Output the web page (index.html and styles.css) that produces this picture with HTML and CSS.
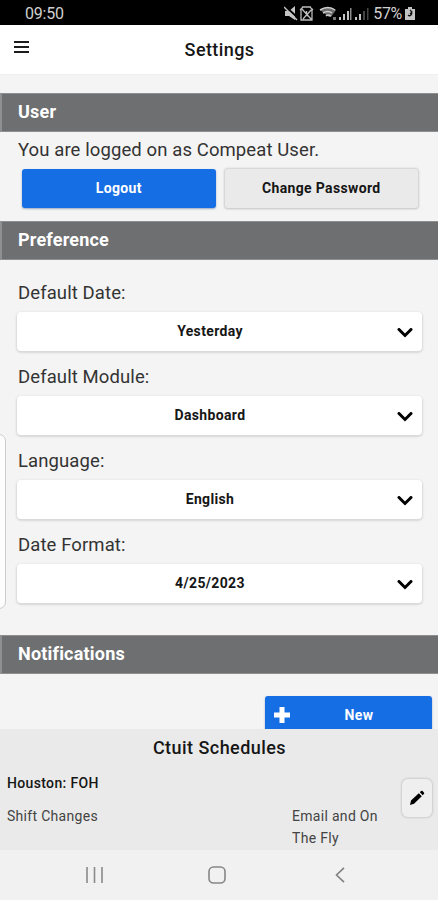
FILE: index.html
```html
<!DOCTYPE html>
<html lang="en">
<head>
<meta charset="utf-8">
<meta name="viewport" content="width=device-width">
<title>Settings</title>
<link rel="stylesheet" href="styles.css">
</head>
<body>
<div class="status">
  <span class="clock">09:50</span>
  <svg class="status-icons" width="88" height="18" viewBox="0 0 88 18">
    <g fill="#c4c4c4" stroke="none">
      <path d="M1 6h4l6-5v14l-6-4H1z"/>
      <path d="M1 1l13 12" stroke="#000" stroke-width="2"/>
      <path d="M0 2l13 13" stroke="#c4c4c4" stroke-width="1.5"/>
      <path d="M36 5q8-6 16 0l-5 7h-2z" opacity=".55"/>
      <path d="M36 5q8-5 15 0M39 8q5-3 9 0M42 11q2-2 5 0" fill="none" stroke="#d0d0d0" stroke-width="1.5"/>
      <path d="M49 12h3v3h-3z" opacity=".6"/>
      <path d="M55 12h2v3h-2zM59 9h2v6h-2zM63 6h2v9h-2z"/>
      <path d="M66 3h1.500v12h-1.500z" opacity=".7"/>
      <path d="M71 12h2v3h-2zM75 9h2v6h-2z"/>
      <path d="M79 6h2v9h-2zM83 3h1.500v12h-1.500z" opacity=".35"/>
    </g>
    <g fill="none" stroke="#bcbcbc" stroke-width="1.300">
      <path d="M17 5v10h11V5M16 5l3-3M26 2l3 3M17 3l11 12M28 4l-9 10M22.500 6v4l3 2M18 2h9"/>
    </g>
  </svg>
  <span class="battery-text">57%</span>
  <svg class="battery" width="10" height="13" viewBox="0 0 10 13"><path fill="#c4c4c4" d="M3 0h4v2h3v11H0V2h3z"/><path d="M3 8a2 2 0 1 0 3-3M5 3l2 2-2 2" fill="none" stroke="#111" stroke-width="1.200"/></svg>
</div>
<header class="header">
  <svg class="menu" width="15" height="12" viewBox="0 0 15 12"><path d="M0 1h15M0 6h15M0 11h15" stroke="#1c1c1c" stroke-width="2"/></svg>
  <h1>Settings</h1>
</header>
<main class="page">
  <h2 class="bar">User</h2>
  <section class="user">
    <p class="label message">You are logged on as Compeat User.</p>
    <div class="actions">
      <button class="btn primary">Logout</button>
      <button class="btn">Change Password</button>
    </div>
  </section>
  <h2 class="bar">Preference</h2>
  <section class="prefs">
    <div class="field"><div class="label">Default Date:</div><div class="select"><span>Yesterday</span><svg class="chev" width="16" height="10" viewBox="0 0 16 10"><path d="M2 1.500L8 7.500l6-6"/></svg></div></div>
    <div class="field"><div class="label">Default Module:</div><div class="select"><span>Dashboard</span><svg class="chev" width="16" height="10" viewBox="0 0 16 10"><path d="M2 1.500L8 7.500l6-6"/></svg></div></div>
    <div class="field"><div class="label">Language:</div><div class="select"><span>English</span><svg class="chev" width="16" height="10" viewBox="0 0 16 10"><path d="M2 1.500L8 7.500l6-6"/></svg></div></div>
    <div class="field"><div class="label">Date Format:</div><div class="select"><span>4/25/2023</span><svg class="chev" width="16" height="10" viewBox="0 0 16 10"><path d="M2 1.500L8 7.500l6-6"/></svg></div></div>
  </section>
  <h2 class="bar">Notifications</h2>
  <div class="new-row">
    <button class="btn primary new"><svg class="plus" width="16" height="16" viewBox="0 0 16 16"><path d="M5.500 0h5v5.500H16v5h-5.500V16h-5v-5.500H0v-5h5.500z" fill="#fff"/></svg><span>New</span></button>
  </div>
  <section class="schedule">
    <h3>Ctuit Schedules</h3>
    <div class="site">
      <div class="site-info">
        <strong>Houston: FOH</strong>
        <div class="rule"><span>Shift Changes</span><span class="via">Email and On The Fly</span></div>
      </div>
      <button class="edit" aria-label="Edit"><svg width="16" height="16" viewBox="0 0 16 16"><path d="M1 15l1-4.500L9.800 3.200l3 3L5 13.800zM10.800 2.300l1.200-1.200q.8-.7 1.600 0l1.300 1.300q.8.800 0 1.600L13.700 5.200z" fill="#000"/></svg></button>
    </div>
  </section>
</main>
<nav class="nav">
  <svg width="17" height="16" viewBox="0 0 17 16"><path d="M1 0v16M8.500 0v16M16 0v16" stroke="#8a8a8a" stroke-width="1.600"/></svg>
  <svg class="home" width="18" height="18" viewBox="0 0 18 18"><rect x="1" y="1" width="16" height="16" rx="4.500" fill="none" stroke="#868686" stroke-width="1.600"/></svg>
  <svg width="10" height="16" viewBox="0 0 10 16"><path d="M9 .8L1.500 8 9 15.200" fill="none" stroke="#808080" stroke-width="1.600"/></svg>
</nav>
<div class="edge-panel"></div>
</body>
</html>
```
FILE: styles.css
```css
* { box-sizing: border-box; }
body { margin: 0; width: 438px; height: 900px; overflow: hidden; display: flex; flex-direction: column; background: #f4f4f4; color: #161616; font-family: Roboto, sans-serif; }
h1, h2, h3, p { margin: 0; }
button { font-family: inherit; border: 0; padding: 0; }
svg { display: block; }
.status { height: 25px; flex: none; background: #000; color: #d0d0d0; display: flex; align-items: center; padding: 2px 23px 0 25px; font-size: 16px; }
.clock { letter-spacing: -.2px; }
.status-icons { margin-left: auto; }
.battery-text { margin-left: 1px; letter-spacing: -.3px; }
.battery { margin-left: 3px; }
.header { height: 50px; flex: none; background: #fff; border-bottom: 1px solid #f0f0f0; display: grid; grid-template-columns: 14px 1fr 14px; align-items: center; padding: 0 13px; }
.header h1 { text-align: center; font-size: 18px; font-weight: 500; letter-spacing: .4px; line-height: 24px; padding-left: 1px; }
.menu { margin: -6px 0 0 1px; }
.page { flex: none; height: 775px; padding-top: 18px; }
.bar { height: 39px; line-height: 36px; background: #6d6f71; color: #fff; border-left: 2px solid #8d8f90; border-top: 1px solid #8d8f90; border-bottom: 1px solid #8d8f90; padding-left: 16px; font-size: 18px; font-weight: 700; letter-spacing: .2px; }
.label { font-size: 18.5px; line-height: 24px; letter-spacing: .1px; color: #333; }
.prefs .label { padding-left: 1px; }
.user { height: 89px; padding: 6px 20px 0 18px; }
.actions { display: flex; gap: 9px; padding: 7px 0 0 4px; }
.btn { flex: 1; height: 39px; border-radius: 3px; background: #eaeaea; color: #161616; font-size: 14px; font-weight: 700; letter-spacing: .35px; box-shadow: 0 0 2px 1px #d0d0d0, 0 1px 2px #ccc; }
.primary { background: #166ee5; color: #fff; box-shadow: 0 1px 2px #9aa9bf; }
.actions .btn { padding-bottom: 1px; }
.prefs { height: 375px; padding: 21px 16px 0 17px; }
.field { height: 84px; }
.label + .select { margin-top: 7px; }
.select { height: 39px; display: grid; grid-template-columns: 1fr 50px; align-items: center; background: #fff; border-radius: 4px; box-shadow: 0 1px 2px 1px #d8d8d8; font-size: 14px; font-weight: 700; letter-spacing: .35px; text-align: center; }
.select span { padding: 0 0 1px 31px; }
.chev { margin: 2px 0 0 25px; fill: none; stroke: #000; stroke-width: 3; stroke-linecap: round; }
.new-row { height: 55px; padding: 22px 6px 0; display: flex; justify-content: flex-end; overflow: hidden; }
.new { flex: none; width: 167px; height: 39px; display: grid; grid-template-columns: 25px 1fr; align-items: center; padding: 0 0 2px 9px; }
.new span { padding-right: 13px; }
.schedule { height: 121px; background: #eaeaea; padding-top: 7px; }
.schedule h3 { text-align: center; font-size: 18px; line-height: 24px; font-weight: 500; letter-spacing: .45px; padding-left: 1px; }
.site { display: flex; padding: 12px 6px 0 7px; }
.site-info { flex: 1; font-size: 14px; line-height: 22px; }
.site-info strong { display: block; font-weight: 500; letter-spacing: .35px; }
.rule { display: flex; justify-content: space-between; margin-top: 11px; color: #444; letter-spacing: .3px; }
.via { width: 110px; }
.edit { width: 30px; height: 38px; margin-top: 7px; border-radius: 6px; background: #efefef; box-shadow: 0 0 2px 1px #ccc; display: grid; place-items: center; }
.nav { position: absolute; left: 0; top: 850px; width: 438px; height: 50px; background: #f1f1f1; display: flex; justify-content: space-between; align-items: center; padding: 0 93px 0 86px; }
.home { margin-right: 5px; }
.edge-panel { position: absolute; left: -8px; top: 434px; width: 14px; height: 175px; background: #fdfdfd; border: 1px solid #ccc; border-radius: 7px; }
```
